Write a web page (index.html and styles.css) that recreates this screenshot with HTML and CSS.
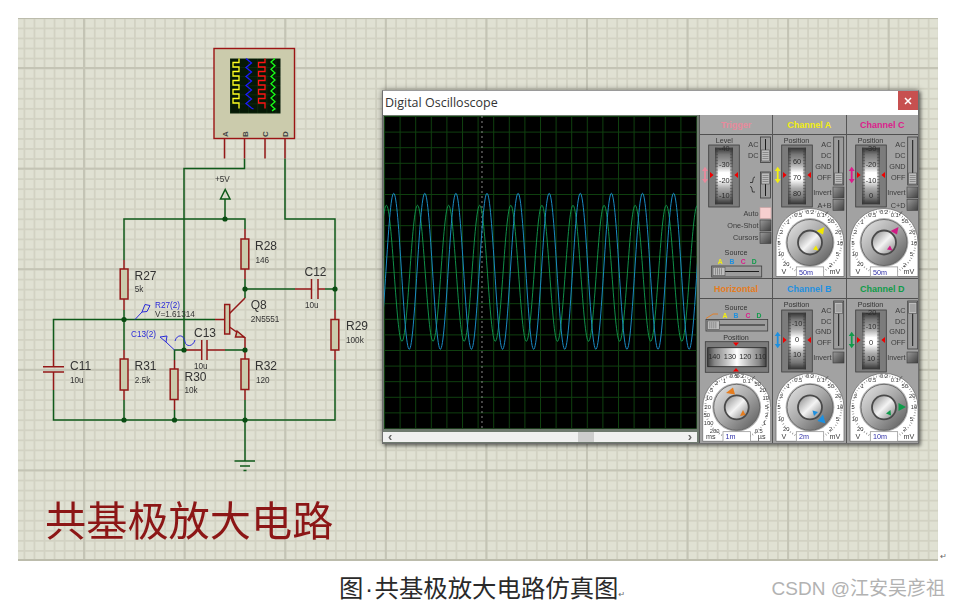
FILE: index.html
```html
<!DOCTYPE html>
<html lang="zh">
<head>
<meta charset="utf-8">
<title>共基极放大电路仿真图</title>
<link rel="stylesheet" href="styles.css">
</head>
<body>
<svg class="defs" aria-hidden="true">
  <defs>
    <linearGradient id="gv" x1="0" y1="0" x2="0" y2="1">
      <stop offset="0" stop-color="#333"/><stop offset=".12" stop-color="#777"/><stop offset=".3" stop-color="#aaa"/><stop offset=".44" stop-color="#fff"/><stop offset=".56" stop-color="#fff"/><stop offset=".72" stop-color="#aaa"/><stop offset=".88" stop-color="#777"/><stop offset="1" stop-color="#333"/>
    </linearGradient>
    <linearGradient id="ge" x1="0" y1="0" x2="1" y2="0">
      <stop offset="0" stop-color="#333" stop-opacity=".75"/><stop offset=".2" stop-color="#333" stop-opacity="0"/><stop offset=".8" stop-color="#333" stop-opacity="0"/><stop offset="1" stop-color="#333" stop-opacity=".75"/>
    </linearGradient>
    <linearGradient id="gh" x1="0" y1="0" x2="1" y2="0">
      <stop offset="0" stop-color="#444"/><stop offset=".12" stop-color="#888"/><stop offset=".3" stop-color="#bbb"/><stop offset=".5" stop-color="#fff"/><stop offset=".7" stop-color="#bbb"/><stop offset=".88" stop-color="#888"/><stop offset="1" stop-color="#444"/>
    </linearGradient>
    <linearGradient id="gb" x1="0" y1="0" x2="1" y2="1">
      <stop offset="0" stop-color="#9a9a9a"/><stop offset="1" stop-color="#404040"/>
    </linearGradient>
    <linearGradient id="gk" x1="0" y1="0" x2="1" y2="1">
      <stop offset="0" stop-color="#e8e8e8"/><stop offset=".5" stop-color="#a6a6a6"/><stop offset="1" stop-color="#565656"/>
    </linearGradient>
    <linearGradient id="gc" x1="0" y1="0" x2="1" y2="1">
      <stop offset="0" stop-color="#808080"/><stop offset=".5" stop-color="#f4f4f4"/><stop offset="1" stop-color="#787878"/>
    </linearGradient>
    <g id="drum-v">
      <rect class="fr" width="30.6" height="62"/>
      <rect x="6.3" y="2.7" width="18" height="56.6" fill="url(#gv)"/>
      <rect x="6.3" y="2.7" width="18" height="56.6" fill="url(#ge)"/>
      <path class="ticks" d="M8,3V59M22.6,3V59"/>
      <path class="red" d="M1.3,27l3.6,3l-3.6,3zM29.3,27l-3.6,3l3.6,3z"/>
    </g>
    <path id="dbl" fill="currentColor" d="M0,-8.3l-3,4.4h2.1v7.8h-2.1l3,4.4l3,-4.4h-2.1v-7.8h2.1z"/>
    <g id="slider-v">
      <rect class="sl" width="10" height="48"/>
      <path class="slot" d="M5,3V45"/>
    </g>
    <g id="thumb-v">
      <rect class="th" width="8" height="11"/>
      <path class="stripe" d="M1,2.5H7M1,4.5H7M1,6.5H7M1,8.5H7"/>
    </g>
    <g id="thumb-h">
      <rect class="th" width="12" height="8.5"/>
      <path class="stripe" d="M2.5,1V7.5M4.5,1V7.5M6.5,1V7.5M8.5,1V7.5"/>
    </g>
    <rect id="btn" class="bt" width="11" height="11"/>
    <g id="knob">
      <path class="dial" d="M-34,34V0A34,34 0 0 1 34,0V34Z"/>
      <circle class="dticks" r="31.5"/>
      <circle r="24.4" fill="#000" fill-opacity=".3"/>
      <circle r="23" fill="url(#gk)" stroke="#5a5a5a" stroke-width=".8"/>
      <circle r="12" fill="url(#gc)" stroke="#4a4a4a" stroke-width="1.8"/>
      <rect class="vbox" x="-13.7" y="24.4" width="27.4" height="9.6"/>
    </g>
    <g id="vdial">
      <use href="#knob"/>
      <path class="sep" d="M15,-27.5L18,-31"/>
      <g class="sc">
        <text x="-11.7" y="-25.5">0.5</text><text x="0" y="-29">0.2</text><text x="10.7" y="-25.5">0.1</text>
        <text x="20.7" y="-19.5">50</text><text x="28.3" y="-9">20</text><text x="30" y="2">10</text>
        <text x="27.3" y="13.5">5</text><text x="20.7" y="24">2</text>
        <text x="-22" y="-19">1</text><text x="-28.3" y="-9">2</text><text x="-31" y="2">5</text>
        <text x="-29" y="13.5">10</text><text x="-23.7" y="23.5">20</text>
      </g>
      <text class="un" x="-26" y="31.5">V</text><text class="un" x="25" y="31.5">mV</text>
    </g>
    <g id="hdial">
      <use href="#knob"/>
      <path class="sep" d="M15,-27.5L18,-31"/>
      <g class="sc">
        <text x="-3" y="-29">0.5</text><text x="3.5" y="-29">0.2</text><text x="10" y="-24.5">0.1</text>
        <text x="-12" y="-24.5">1</text><text x="-20" y="-22">2</text>
        <text x="-25" y="-15">5</text><text x="-27.5" y="-7">10</text><text x="-29" y="1.5">20</text>
        <text x="-30" y="10">50</text><text x="-28" y="18">100</text><text x="-22" y="25.5">200</text>
        <text x="21" y="-21">50</text><text x="26" y="-15">20</text><text x="29" y="-7">10</text>
        <text x="30" y="1.5">5</text><text x="30" y="10">2</text><text x="28" y="18">1</text><text x="22" y="25.5">0.5</text>
      </g>
      <text class="un" x="-26" y="31.5">ms</text><text class="un" x="25" y="31.5">µs</text>
    </g>
  </defs>
</svg>

<main class="page">
  <div class="canvas">
    <svg class="schem" width="920" height="543" viewBox="18 18 920 543">
      <defs>
        <pattern id="iconGrid" width="9.1" height="9.1" patternUnits="userSpaceOnUse" x="230" y="58">
          <rect width="9.1" height="9.1" fill="#061806"/>
          <path d="M0,0H9.1M0,0V9.1" stroke="#1c4a1c" stroke-width=".6"/>
        </pattern>
      </defs>

      <!-- virtual instrument -->
      <rect class="body" x="214" y="48.5" width="80.5" height="90"/>
      <rect x="230" y="58.5" width="50.5" height="55" fill="url(#iconGrid)"/>
      <path class="tr" stroke="#ffff20" d="M239,58.5v4h-6v4.5h6v4.5h-6v4.5h6v4.5h-6v4.5h6v4.5h-6v4.5h6v4.5h-6v4.5h6v5.5"/>
      <path class="tr" stroke="#1a1aff" d="M246,58.5l5.5,4.5l-5.5,4.5l5.5,4.5l-5.5,4.5l5.5,4.5l-5.5,4.5l5.5,4.5l-5.5,4.5l5.5,4.5l-5.5,4.5l5.5,4.5l2,1"/>
      <path class="tr" stroke="#ff1414" d="M265,58.5v4h-6.5v4.5h6.5v4.5h-6.5v4.5h6.5v4.5h-6.5v4.5h6.5v4.5h-6.5v4.5h6.5v4.5h-6.5v4.5h6.5v5.5"/>
      <path class="tr" stroke="#18ff18" d="M275,58.5l-4,3.6l4,3.6l-4,3.6l4,3.6l-4,3.6l4,3.6l-4,3.6l4,3.6l-4,3.6l4,3.6l-4,3.6l4,3.6l-4,3.6l4,3.6l-3,2"/>
      <g class="pinlabels">
        <text transform="translate(228,134) rotate(-90)">A</text>
        <text transform="translate(248,134) rotate(-90)">B</text>
        <text transform="translate(268,134) rotate(-90)">C</text>
        <text transform="translate(288,134) rotate(-90)">D</text>
      </g>

      <!-- wires -->
      <path class="wire" d="M244.5,158.5V168.5H184V350M285,158.5V219H335V310M225,219V199M124,260V219H245V229M245,279V298M124,310V350M124,400V420M53.5,350V319.5H215M53.5,390V420H335V360M245,350H225M184,350H174.5V360M174.5,410V420M245,400V461M245,289H295M325,289H335"/>
      <path class="wire" d="M220.5,199H230L225.2,189.5Z"/>
      <!-- component pins -->
      <path class="pin" d="M224.5,138.5V158.5M244.5,138.5V158.5M265,138.5V158.5M285,138.5V158.5"/>
      <path class="pin" d="M124,260V269M124,299V310M124,350V359M124,390V400M245,229V239M245,269V279M335,310V319.5M335,350V360M174.5,360V369M174.5,399.5V410M245,350V359M245,389.5V400"/>
      <path class="pin" d="M53.5,350V366.7M53.5,372V390M43,366.7H64M43,372H64"/>
      <path class="pin" d="M295,289H311.5M318,289H325M311.5,279V299M318,279V299"/>
      <path class="pin" d="M184,350H201.7M207,350H225M201.7,340V360M207,340V360"/>
      <!-- resistors -->
      <rect class="res" x="120.2" y="269" width="7.8" height="30"/>
      <rect class="res" x="120.2" y="359" width="7.8" height="31"/>
      <rect class="res" x="241" y="239" width="7.8" height="30"/>
      <rect class="res" x="241" y="359" width="7.8" height="30.5"/>
      <rect class="res" x="331" y="319.5" width="7.8" height="30.5"/>
      <rect class="res" x="170.2" y="369" width="7.8" height="30.5"/>
      <!-- transistor -->
      <path class="pin" d="M215,319.5H224.5M245,298L229.5,313.5M229.5,327L245,338V350"/>
      <rect class="res" x="224.7" y="304.5" width="5" height="29.5"/>
      <path class="res" d="M237,331L244,337L235.5,337Z"/>
      <!-- ground -->
      <path class="wire" d="M234.5,461H255M240,466H250M243.5,470.5H246.5"/>
      <!-- junctions -->
      <g class="jn">
        <circle cx="225" cy="219" r="2.6"/><circle cx="245" cy="289" r="2.6"/><circle cx="335" cy="289" r="2.6"/>
        <circle cx="124" cy="319.5" r="2.6"/><circle cx="184" cy="350" r="2.6"/><circle cx="245" cy="350" r="2.6"/>
        <circle cx="124" cy="420" r="2.6"/><circle cx="174.5" cy="420" r="2.6"/><circle cx="245" cy="420" r="2.6"/>
      </g>
      <!-- probes -->
      <path class="probe" d="M135,319.5L142,312M142,312L145,304.5L150,305.5L147,311.5ZM160,337L166,342L167,336ZM166,342L174.5,350M175,341C177,334 184,334 185,342C186,347 193,347 195,340"/>

      <g class="lbl">
        <text x="255" y="250">R28</text><text x="134.5" y="280">R27</text><text x="304.5" y="276">C12</text>
        <text x="250.7" y="309">Q8</text><text x="346" y="330">R29</text><text x="194" y="336.7">C13</text>
        <text x="184.5" y="381">R30</text><text x="134.5" y="370">R31</text><text x="255" y="370">R32</text>
        <text x="70" y="370">C11</text>
      </g>
      <g class="val">
        <text x="255.5" y="263">146</text><text x="134.8" y="292">5k</text><text x="305" y="308">10u</text>
        <text x="250.7" y="321.7">2N5551</text><text x="346" y="343">100k</text><text x="194" y="368.5">10u</text>
        <text x="184.5" y="392.7">10k</text><text x="134.8" y="382.7">2.5k</text><text x="256" y="382.7">120</text>
        <text x="70" y="382.7">10u</text><text x="215" y="181.5">+5V</text>
        <text x="155" y="317.3">V=1.61314</text>
      </g>
      <g class="pr">
        <text x="155" y="307.7">R27(2)</text><text x="131" y="337">C13(2)</text>
      </g>
      <text class="bigtitle" x="45" y="536">共基极放大电路</text>
    </svg>

    <section class="window">
      <header class="titlebar">
        <span class="title">Digital Oscilloscope</span>
        <span class="close"><svg width="8" height="8" viewBox="0 0 8 8"><path d="M1,1L7,7M7,1L1,7" stroke="#fff" stroke-width="1.5"/></svg></span>
      </header>
      <div class="content">
        <div class="display">
          <svg class="screen" width="312.6" height="312.6" viewBox="0 0 312.6 312.6">
            <defs>
              <pattern id="scopeGrid" width="15.6" height="15.6" patternUnits="userSpaceOnUse">
                <path d="M0,.5H15.6M.5,0V15.6" stroke="#0f400f" stroke-width="1"/>
              </pattern>
            </defs>
            <rect width="312.6" height="312.6" fill="#000"/>
            <rect width="312.6" height="312.6" fill="url(#scopeGrid)"/>
            <path d="M98,0V312" stroke="#8c8c8c" stroke-width="1" stroke-dasharray="2 3"/>
            <path class="wave green" d="M-28.7,89.3c5.66,0 9.89,136 15.55,136s9.89,-136 15.55,-136s9.89,136 15.55,136s9.89,-136 15.55,-136s9.89,136 15.55,136s9.89,-136 15.55,-136s9.89,136 15.55,136s9.89,-136 15.55,-136s9.89,136 15.55,136s9.89,-136 15.55,-136s9.89,136 15.55,136s9.89,-136 15.55,-136s9.89,136 15.55,136s9.89,-136 15.55,-136s9.89,136 15.55,136s9.89,-136 15.55,-136s9.89,136 15.55,136s9.89,-136 15.55,-136s9.89,136 15.55,136s9.89,-136 15.55,-136s9.89,136 15.55,136s9.89,-136 15.55,-136"/>
            <path class="wave blue" d="M-21.4,77.3c5.66,0 9.89,156 15.55,156s9.89,-156 15.55,-156s9.89,156 15.55,156s9.89,-156 15.55,-156s9.89,156 15.55,156s9.89,-156 15.55,-156s9.89,156 15.55,156s9.89,-156 15.55,-156s9.89,156 15.55,156s9.89,-156 15.55,-156s9.89,156 15.55,156s9.89,-156 15.55,-156s9.89,156 15.55,156s9.89,-156 15.55,-156s9.89,156 15.55,156s9.89,-156 15.55,-156s9.89,156 15.55,156s9.89,-156 15.55,-156s9.89,156 15.55,156s9.89,-156 15.55,-156s9.89,156 15.55,156s9.89,-156 15.55,-156"/>
          </svg>
          <div class="scrollbar">
            <span class="arrow">‹</span>
            <span class="sthumb"></span>
            <span class="arrow">›</span>
          </div>
        </div>
        <div class="panels">
          <!-- Trigger -->
          <article class="panel">
            <h3 class="ph c-t">Trigger</h3>
            <svg class="pbody" width="72" height="144" viewBox="0 0 72 144">
              <text class="cap" x="24.3" y="7.5">Level</text>
              <use href="#drum-v" x="8.7" y="10"/>
              <g class="dn"><text x="24.3" y="16">-40</text><text x="24.3" y="32">-30</text><text x="24.3" y="47.7">-20</text><text x="24.3" y="63">-10</text></g>
              <use class="c-t" href="#dbl" x="5" y="40"/>
              <g class="opt"><text x="58.5" y="12.2">AC</text><text x="58.5" y="23.2">DC</text><text x="58.5" y="80.8">Auto</text><text x="58.5" y="92.5">One-Shot</text><text x="58.5" y="105">Cursors</text></g>
              <rect class="sl" x="60.5" y="2" width="10" height="25.5"/><path class="slot" d="M65.5,4V26"/><use href="#thumb-v" x="61.5" y="15"/>
              <rect class="sl" x="60.5" y="37" width="10" height="26"/><path class="slot" d="M65.5,39V61"/><use href="#thumb-v" x="61.5" y="38"/>
              <path class="edge" d="M50,47.5h2.5c.8,-3 .3,-5.5 2.5,-5.5M50,51.5c2.2,0 1.7,2.5 2.5,5.5H55"/>
              <rect class="bt-on" x="60" y="72.5" width="11" height="11"/>
              <use href="#btn" x="60" y="85"/><use href="#btn" x="60" y="97.5"/>
              <text class="cap" x="36" y="120">Source</text>
              <g class="src"><text class="c-a" x="20.3" y="129">A</text><text class="c-b" x="32" y="129">B</text><text class="c-c" x="43.3" y="129">C</text><text class="c-d" x="54.3" y="129">D</text></g>
              <rect class="sl" x="11.7" y="131" width="50" height="11"/><path class="slot" d="M14,136.5H59"/><use href="#thumb-h" x="13" y="132.2"/>
            </svg>
          </article>
          <!-- Channel A -->
          <article class="panel">
            <h3 class="ph c-a">Channel A</h3>
            <svg class="pbody" width="72" height="144" viewBox="0 0 72 144">
              <text class="cap" x="23.5" y="7.5">Position</text>
              <use href="#drum-v" x="8.7" y="10"/>
              <g class="dn"><text x="24" y="29">60</text><text x="24" y="44.7">70</text><text x="24" y="60.5">80</text></g>
              <use class="c-a" href="#dbl" x="4.7" y="40"/>
              <g class="opt"><text x="58.5" y="12.2">AC</text><text x="58.5" y="23.2">DC</text><text x="58.5" y="34.2">GND</text><text x="58.5" y="44.8">OFF</text><text x="58.5" y="60">Invert</text><text x="58.5" y="73">A+B</text></g>
              <use href="#slider-v" x="60.7" y="2"/><use href="#thumb-v" x="61.7" y="38"/>
              <use href="#btn" x="60" y="52"/><use href="#btn" x="60" y="64.3"/>
              <use href="#vdial" x="37" y="107.5"/>
              <text class="vt" x="26" y="139.5">50m</text>
              <polygon class="f-a" points="51.5,92 50,99.5 43.5,96"/><polygon class="f-a" points="45.5,115.5 40,114.5 43,110.5"/>
            </svg>
          </article>
          <!-- Channel C -->
          <article class="panel">
            <h3 class="ph c-c">Channel C</h3>
            <svg class="pbody" width="72" height="144" viewBox="0 0 72 144">
              <text class="cap" x="23.5" y="7.5">Position</text>
              <use href="#drum-v" x="8.7" y="10"/>
              <g class="dn"><text x="24" y="16">-30</text><text x="24" y="32">-20</text><text x="24" y="47.7">-10</text><text x="24" y="63">0</text></g>
              <use class="c-c" href="#dbl" x="4.7" y="40"/>
              <g class="opt"><text x="58.5" y="12.2">AC</text><text x="58.5" y="23.2">DC</text><text x="58.5" y="34.2">GND</text><text x="58.5" y="44.8">OFF</text><text x="58.5" y="60">Invert</text><text x="58.5" y="73">C+D</text></g>
              <use href="#slider-v" x="60.7" y="2"/><use href="#thumb-v" x="61.7" y="38"/>
              <use href="#btn" x="60" y="52"/><use href="#btn" x="60" y="64.3"/>
              <use href="#vdial" x="37" y="107.5"/>
              <text class="vt" x="26" y="139.5">50m</text>
              <polygon class="f-c" points="51.5,92 50,99.5 43.5,96"/><polygon class="f-c" points="45.5,115.5 40,114.5 43,110.5"/>
            </svg>
          </article>
          <!-- Horizontal -->
          <article class="panel lower">
            <h3 class="ph c-h">Horizontal</h3>
            <svg class="pbody" width="72" height="144" viewBox="0 0 72 144">
              <text class="cap" x="36" y="11">Source</text>
              <g class="src"><text class="c-a" x="25" y="18.5">A</text><text class="c-b" x="36" y="18.5">B</text><text class="c-c" x="48" y="18.5">C</text><text class="c-d" x="59" y="18.5">D</text></g>
              <path class="ramp" d="M6,19.5L13,15H18"/>
              <rect class="sl" x="6" y="20.5" width="61.7" height="11.5"/><path class="slot" d="M8,26H65"/><use href="#thumb-h" x="7.3" y="21.9"/>
              <text class="cap" x="36" y="40.5">Position</text>
              <rect class="fr" x="5.3" y="42.7" width="63.4" height="30.6"/>
              <rect class="hdrum" x="7.7" y="48.7" width="58.4" height="19"/>
              <path class="red" d="M33,43.5h6l-3,3.5zM33,72.5h6l-3,-3.5z"/>
              <g class="dn"><text x="14.3" y="60">140</text><text x="30" y="60">130</text><text x="45.3" y="60">120</text><text x="60.5" y="60">110</text></g>
              <use href="#hdial" x="36.7" y="108.3"/>
              <text class="vt" x="25.5" y="140.3">1m</text>
              <polygon class="f-h" points="26,94 33,88.5 35,95.5"/><polygon class="f-h" points="40,117 43,111 45.5,116"/>
            </svg>
          </article>
          <!-- Channel B -->
          <article class="panel lower">
            <h3 class="ph c-b">Channel B</h3>
            <svg class="pbody" width="72" height="144" viewBox="0 0 72 144">
              <text class="cap" x="23.5" y="8.3">Position</text>
              <use href="#drum-v" x="8.7" y="11"/>
              <g class="dn"><text x="24" y="26.5">-10</text><text x="24" y="42.5">0</text><text x="24" y="58">10</text></g>
              <use class="c-b" href="#dbl" x="4.7" y="41"/>
              <g class="opt"><text x="58.5" y="13.5">AC</text><text x="58.5" y="24.5">DC</text><text x="58.5" y="35.2">GND</text><text x="58.5" y="46.2">OFF</text><text x="58.5" y="61">Invert</text></g>
              <use href="#slider-v" x="60.7" y="2"/><use href="#thumb-v" x="61.7" y="3.5"/>
              <use href="#btn" x="60" y="53"/>
              <use href="#vdial" x="37" y="108.3"/>
              <text class="vt" x="26" y="140.3">2m</text>
              <polygon class="f-b" points="52.5,124.5 44.5,122 50,115.5"/><polygon class="f-b" points="39.5,111.5 45,113 41,117"/>
            </svg>
          </article>
          <!-- Channel D -->
          <article class="panel lower">
            <h3 class="ph c-d">Channel D</h3>
            <svg class="pbody" width="72" height="144" viewBox="0 0 72 144">
              <text class="cap" x="23.5" y="8.3">Position</text>
              <use href="#drum-v" x="8.7" y="11"/>
              <g class="dn"><text x="24" y="16">-20</text><text x="24" y="30">-10</text><text x="24" y="45.5">0</text><text x="24" y="61.5">10</text></g>
              <use class="c-d" href="#dbl" x="4.7" y="41"/>
              <g class="opt"><text x="58.5" y="13.5">AC</text><text x="58.5" y="24.5">DC</text><text x="58.5" y="35.2">GND</text><text x="58.5" y="46.2">OFF</text><text x="58.5" y="61">Invert</text></g>
              <use href="#slider-v" x="60.7" y="2"/><use href="#thumb-v" x="61.7" y="3.5"/>
              <use href="#btn" x="60" y="53"/>
              <use href="#vdial" x="37" y="108.3"/>
              <text class="vt" x="26" y="140.3">10m</text>
              <polygon class="f-d" points="59,108 51.5,104 51.5,112"/><polygon class="f-d" points="39,114.5 43.5,111 44,116.5"/>
            </svg>
          </article>
        </div>
      </div>
    </section>
    <span class="retmark canvasmark">↵</span>
  </div>
  <footer class="capline">
    <p class="caption">图<span class="dot">·</span>共基极放大电路仿真图<span class="retmark">↵</span></p>
    <p class="wm">CSDN @江安吴彦祖</p>
  </footer>
</main>
</body>
</html>
```

FILE: styles.css
```css
html, body { margin: 0; padding: 0; background: #fff; overflow: hidden; }
body { width: 959px; height: 610px; font-family: "Liberation Sans", Arial, sans-serif; }
.defs { display: block; width: 0; height: 0; }
.page { padding: 18px 21px 0 18px; }

/* schematic canvas */
.canvas {
  position: relative;
  width: 920px;
  height: 543px;
  background-color: #e0e1d3;
  background-image:
    linear-gradient(to right, #c4c4b5 2px, transparent 2px),
    linear-gradient(to bottom, #c4c4b5 2px, transparent 2px),
    linear-gradient(to right, #d2d2c3 1.5px, transparent 1.5px),
    linear-gradient(to bottom, #d2d2c3 1.5px, transparent 1.5px);
  background-size: 100.6px 100.6px, 100.6px 100.6px, 10.06px 10.06px, 10.06px 10.06px;
  background-position: 65px 0, 0 49px, 5.5px 0, 0 9.5px;
  box-shadow: inset 0 1px 0 #bcbcac, inset 0 -2px 0 #bcbcac;
}
.schem { display: block; filter: blur(.3px); }
.schem .body { fill: #cbcbac; stroke: #9c1414; stroke-width: 1.4; }
.tr { fill: none; stroke-width: 1.3; }
.pinlabels text { font-size: 8px; font-weight: 700; fill: #444; text-anchor: middle; }
.wire { fill: none; stroke: #0f5a1a; stroke-width: 1.5; }
.pin { fill: none; stroke: #941818; stroke-width: 1.5; }
.res { fill: #cbcbac; stroke: #941818; stroke-width: 1.5; }
.jn circle { fill: #0a4c13; }
.probe { fill: none; stroke: #2a2ad8; stroke-width: 1; }
.lbl text { font-size: 12px; fill: #333; }
.val text { font-size: 8.2px; fill: #333; }
.pr text { font-size: 8.2px; fill: #2a2ad8; }
.bigtitle {
  font-family: "Noto Sans CJK SC", sans-serif;
  font-size: 41.2px;
  font-weight: 400;
  fill: #8c1616;
}

/* oscilloscope window */
.window {
  position: absolute;
  left: 364px;
  top: 72px;
  width: 537px;
  height: 354px;
  box-sizing: border-box;
  border: 1px solid #6e6e6e;
  border-top-color: #9a9a9a;
  background: #8a8a8a;
  box-shadow: 0 0 6px rgba(0, 0, 0, .45), 2px 2px 3px rgba(0, 0, 0, .35);
  display: flex;
  flex-direction: column;
  filter: blur(.3px);
}
.titlebar {
  height: 24px;
  flex: none;
  box-sizing: border-box;
  padding: 0 0 2px 2px;
  background: #fff;
  display: flex;
  align-items: center;
  justify-content: space-between;
}
.title { font-family: "Open Sans", sans-serif; font-size: 12.5px; color: #333; }
.close {
  width: 20px;
  height: 19px;
  align-self: flex-start;
  background: #c75050;
  display: flex;
  align-items: center;
  justify-content: center;
}
.content { display: flex; flex: 1; min-height: 0; }
.display {
  width: 316px;
  flex: none;
  background: #6f7a6f;
  padding: 1px 0 0 1.3px;
  box-sizing: border-box;
}
.screen { display: block; border: 0; }
.wave { fill: none; stroke-width: 1; }
.wave.green { stroke: #109048; }
.wave.blue { stroke: #1a8cc4; }
.scrollbar {
  margin: 3px 0 0 -1.3px;
  width: 314px;
  height: 10.5px;
  background: #f0f0f0;
  display: flex;
  align-items: center;
  padding: 0 5px;
  box-sizing: border-box;
}
.arrow { font-size: 13px; line-height: 10px; color: #666; font-weight: 700; }
.sthumb { width: 16px; height: 10px; background: #cdcdcd; margin: 0 94px 0 auto; }

/* right panels */
.panels {
  flex: 1;
  display: grid;
  grid-template-columns: 73px 73.5px 72.5px;
  grid-template-rows: 163px 165px;
  background: #505050;
}
.panel { background: #a2a2a2; border-left: 1px solid #555; display: flex; flex-direction: column; overflow: hidden; }
.ph {
  margin: 0;
  height: 20px;
  flex: none;
  box-sizing: border-box;
  border-bottom: 1px solid #505050;
  background: #a6a6a6;
  font: 700 9px/20px "Liberation Sans", Arial, sans-serif;
  text-align: center;
}
.lower { border-top: 1px solid #505050; }
.pbody { display: block; flex: none; overflow: hidden; }

.c-t { color: #e88a9c; fill: #e88a9c; }
.c-a { color: #f2ee10; fill: #f2ee10; }
.c-b { color: #1e90e0; fill: #1e90e0; }
.c-c { color: #dc1c8c; fill: #dc1c8c; }
.c-d { color: #0f9c4a; fill: #0f9c4a; }
.c-h { color: #e57c1e; }
.f-a { fill: #f2e800; }
.f-b { fill: #1e90e0; }
.f-c { fill: #d01c84; }
.f-d { fill: #0f9c4a; }
.f-h { fill: #e57c1e; }

.cap { font-size: 7.2px; fill: #333; text-anchor: middle; }
.opt text { font-size: 7.3px; fill: #3c3c3c; text-anchor: end; }
.dn text { font-size: 7.4px; fill: #2c2c2c; text-anchor: middle; }
.src text { font-size: 6.8px; font-weight: 700; text-anchor: middle; }
.fr { fill: #7c7c7c; stroke: #3c3c3c; stroke-width: .8; }
.hdrum { fill: url(#gh); stroke: #222; stroke-width: .8; }
.ticks { fill: none; stroke: #444; stroke-width: 2.4; stroke-dasharray: .5 2.6; }
.red { fill: #f00000; }
.sl { fill: #9c9c9c; stroke: #3e3e3e; stroke-width: .8; }
.slot { fill: none; stroke: #1c1c1c; stroke-width: 1; }
.th { fill: #bdbdbd; stroke: #505050; stroke-width: .6; }
.stripe { fill: none; stroke: #6a6a6a; stroke-width: .6; }
.bt { fill: url(#gb); stroke: #3c3c3c; stroke-width: .6; }
.bt-on { fill: #f6cfcf; stroke: #c9a0a0; stroke-width: .6; }
.edge { fill: none; stroke: #222; stroke-width: .8; }
.ramp { fill: none; stroke: #e57c1e; stroke-width: .9; }
.dial { fill: #fff; stroke: #707070; stroke-width: .8; }
.dticks { fill: none; stroke: #666; stroke-width: 2; stroke-dasharray: .5 2.2; }
.sep { fill: none; stroke: #555; stroke-width: 1; }
.sc text { font-size: 5.8px; fill: #3c3c3c; text-anchor: middle; }
.un { font-size: 7.2px; fill: #3c3c3c; text-anchor: middle; }
.vbox { fill: #fff; stroke: #8c8c8c; stroke-width: .7; }
.vt { font-size: 7.2px; fill: #3030a8; }

/* caption line */
.capline {
  display: flex;
  align-items: center;
  justify-content: space-between;
  height: 49px;
  margin-right: -7px;
  padding-left: 321px;
  padding-top: 1px;
  box-sizing: border-box;
}
.caption {
  margin: 0;
  font-family: "Noto Sans CJK SC", sans-serif;
  font-size: 24.4px;
  font-weight: 400;
  color: #2a2a2a;
  white-space: nowrap;
}
.dot { font-family: "Liberation Sans", sans-serif; padding: 0 1.5px; }
.wm {
  margin: 0;
  font-family: "Liberation Sans", "Noto Sans CJK SC", sans-serif;
  font-size: 19px;
  color: #b2b2b2;
  white-space: nowrap;
}
.retmark { font-family: "DejaVu Sans", sans-serif; font-size: 8px; color: #666; }
.canvasmark { position: absolute; right: -9px; bottom: 0; }
```
